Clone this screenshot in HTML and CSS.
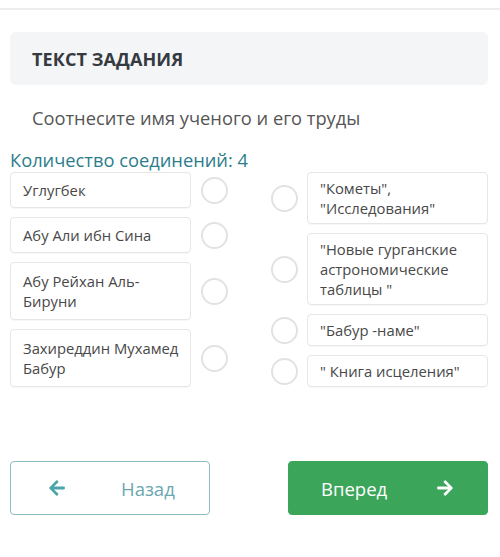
FILE: index.html
```html
<!DOCTYPE html>
<html lang="ru">
<head>
<meta charset="utf-8">
<link rel="stylesheet" href="styles.css">
</head>
<body>
<div class="topbar"></div>
<main class="page">
  <div class="task-head">ТЕКСТ ЗАДАНИЯ</div>
  <p class="instruction">Соотнесите имя ученого и его труды</p>
  <p class="count">Количество соединений: 4</p>
  <div class="match">
    <div class="col col-left">
      <div class="row"><div class="card">Углугбек</div><span class="dot"></span></div>
      <div class="row"><div class="card">Абу Али ибн Сина</div><span class="dot"></span></div>
      <div class="row"><div class="card">Абу Рейхан Аль-<br>Бируни</div><span class="dot"></span></div>
      <div class="row"><div class="card">Захиреддин Мухамед Бабур</div><span class="dot"></span></div>
    </div>
    <div class="col col-right">
      <div class="row"><span class="dot"></span><div class="card">"Кометы",<br>"Исследования"</div></div>
      <div class="row"><span class="dot"></span><div class="card">"Новые гурганские астрономические таблицы "</div></div>
      <div class="row"><span class="dot"></span><div class="card">"Бабур -наме"</div></div>
      <div class="row"><span class="dot"></span><div class="card">" Книга исцеления"</div></div>
    </div>
  </div>
  <div class="nav">
    <button class="btn btn-back">
      <svg class="arrow" viewBox="0 0 448 512" width="18" height="18"><path d="M257.5 445.1l-22.2 22.2c-9.4 9.4-24.6 9.4-33.9 0L7 273c-9.4-9.4-9.4-24.6 0-33.9L201.4 44.7c9.4-9.4 24.6-9.4 33.9 0l22.2 22.2c9.5 9.5 9.3 25-.4 34.3L136.6 216H424c13.3 0 24 10.7 24 24v32c0 13.3-10.7 24-24 24H136.6l120.5 114.8c9.8 9.3 10 24.8.4 34.3z" fill="currentColor"/></svg>
      <span>Назад</span>
    </button>
    <button class="btn btn-next">
      <span>Вперед</span>
      <svg class="arrow" viewBox="0 0 448 512" width="18" height="18"><path d="M190.5 66.9l22.2-22.2c9.4-9.4 24.6-9.4 33.9 0L441 239c9.4 9.4 9.4 24.6 0 33.9L246.6 467.3c-9.4 9.4-24.6 9.4-33.9 0l-22.2-22.2c-9.5-9.5-9.3-25 .4-34.3L311.4 296H24c-13.3 0-24-10.7-24-24v-32c0-13.3 10.7-24 24-24h287.4L190.9 101.2c-9.8-9.3-10-24.8-.4-34.3z" fill="currentColor"/></svg>
    </button>
  </div>
</main>
</body>
</html>
```
FILE: styles.css
```css
* { box-sizing: border-box; }
html, body { margin: 0; padding: 0; background: #fff; }
body {
  font-family: "Open Sans", "Noto Sans", sans-serif;
  color: #4a4a4a;
  width: 500px;
  height: 557px;
  overflow: hidden;
}
.topbar {
  height: 10px;
  border-bottom: 2px solid #ededed;
}
.page {
  padding: 22px 12px 0 10px;
}
.task-head {
  height: 53px;
  background: #f4f5f7;
  border-radius: 6px;
  padding-left: 22px;
  display: flex;
  align-items: center;
  font-weight: 700;
  font-size: 18px;
  color: #343a40;
  letter-spacing: 0.1px;
}
.instruction {
  margin: 20px 0 0 22px;
  font-size: 18.3px;
  line-height: 25px;
  color: #555;
}
.count {
  margin: 17px 0 0 0;
  font-size: 18.3px;
  line-height: 25px;
  color: #2b7d8b;
}
.match {
  margin-top: 0;
  display: flex;
  justify-content: space-between;
}
.col {
  display: flex;
  flex-direction: column;
  gap: 9px;
}
.row {
  display: flex;
  align-items: center;
}
.card {
  width: 181px;
  border: 1px solid #e6e6e6;
  border-radius: 4px;
  font-size: 14.8px;
  line-height: 20px;
  color: #484848;
  padding: 7px 6px 7px 12px;
  box-shadow: 0 1px 1px rgba(0,0,0,0.03);
}
.col-left .card { margin-right: 10px; }
.col-right .card { padding: 5px 6px 5px 12px; margin-left: 9px; }
.col-left .row:nth-child(3) .card,
.col-left .row:nth-child(4) .card { padding: 8px 6px 8px 12px; }
.dot {
  width: 27px;
  height: 27px;
  border: 2px solid #e2e2e2;
  border-radius: 50%;
  flex: none;
}
.nav {
  margin-top: 74px;
  display: flex;
  justify-content: space-between;
}
.btn {
  width: 200px;
  height: 54px;
  border-radius: 4px;
  font-family: "Open Sans", "Noto Sans", sans-serif;
  font-size: 18.5px;
  display: flex;
  align-items: center;
  padding: 0;
  cursor: pointer;
}
.btn-back {
  background: #fff;
  border: 1px solid #8fbcc1;
  color: #6ba7af;
  padding-left: 37px;
  gap: 55px;
}
.btn-back .arrow { color: #4aa6aa; }
.btn-next {
  background: #3ba55a;
  border: 1px solid #3ba55a;
  color: #fff;
  padding-left: 32px;
  gap: 49px;
}
```
